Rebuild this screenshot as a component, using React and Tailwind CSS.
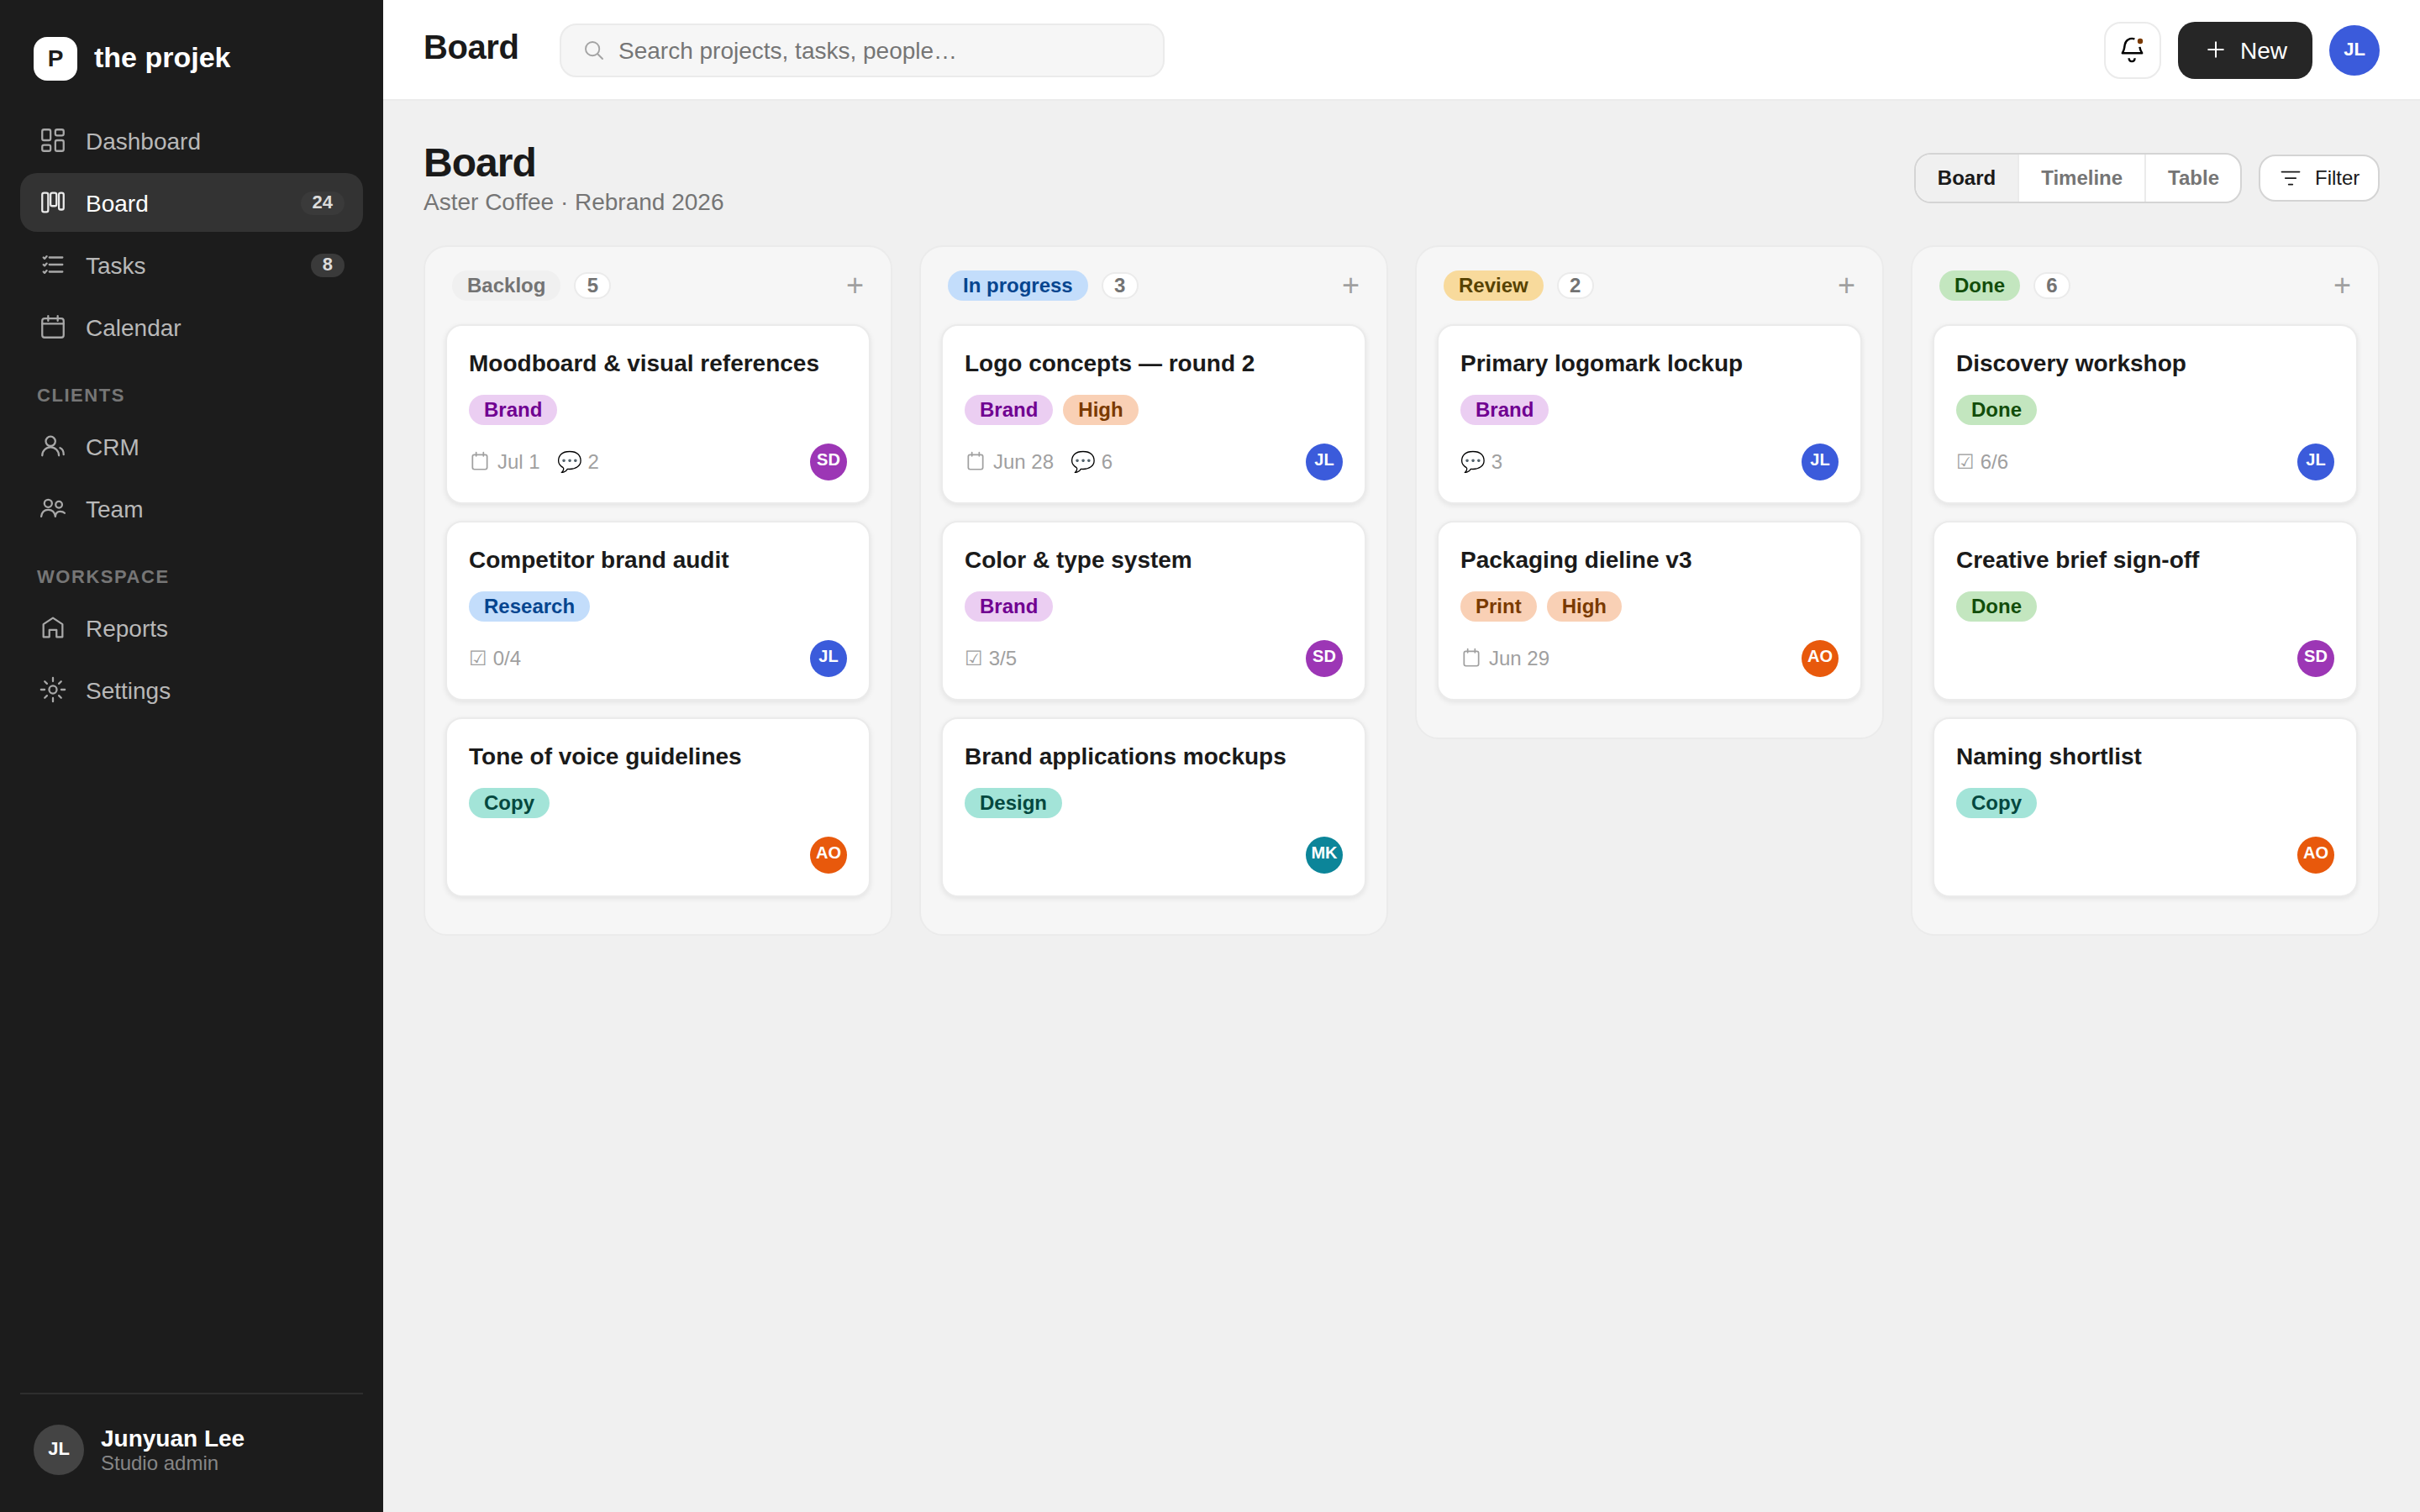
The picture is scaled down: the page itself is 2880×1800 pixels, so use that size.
import React from "react";
import clsx from "clsx";

const TAGS = {
  Brand: "bg-[#ebcef2] text-[#700091]",
  High: "bg-[#f9d0b5] text-[#7a3a00]",
  Print: "bg-[#f9d0b5] text-[#7a3a00]",
  Research: "bg-[#c3ddfb] text-[#06458f]",
  Copy: "bg-[#a3e4d8] text-[#05483f]",
  Design: "bg-[#a3e4d8] text-[#05483f]",
  Done: "bg-[#c3e6bf] text-[#124d0a]",
};

const PEOPLE = {
  JL: "bg-[#3b5bdb]",
  SD: "bg-[#9c36b5]",
  AO: "bg-[#e8590c]",
  MK: "bg-[#0c8599]",
};

const COLUMNS = [
  {
    name: "Backlog",
    pill: "bg-[#f0f0f0] text-[#737373]",
    count: 5,
    cards: [
      { title: "Moodboard & visual references", tags: ["Brand"], due: "Jul 1", comments: 2, who: "SD" },
      { title: "Competitor brand audit", tags: ["Research"], checks: "0/4", who: "JL" },
      { title: "Tone of voice guidelines", tags: ["Copy"], who: "AO" },
    ],
  },
  {
    name: "In progress",
    pill: "bg-[#c3ddfb] text-[#06458f]",
    count: 3,
    cards: [
      { title: "Logo concepts — round 2", tags: ["Brand", "High"], due: "Jun 28", comments: 6, who: "JL" },
      { title: "Color & type system", tags: ["Brand"], checks: "3/5", who: "SD" },
      { title: "Brand applications mockups", tags: ["Design"], who: "MK" },
    ],
  },
  {
    name: "Review",
    pill: "bg-[#f8da9c] text-[#574200]",
    count: 2,
    cards: [
      { title: "Primary logomark lockup", tags: ["Brand"], comments: 3, who: "JL" },
      { title: "Packaging dieline v3", tags: ["Print", "High"], due: "Jun 29", who: "AO" },
    ],
  },
  {
    name: "Done",
    pill: "bg-[#c3e6bf] text-[#124d0a]",
    count: 6,
    cards: [
      { title: "Discovery workshop", tags: ["Done"], checks: "6/6", who: "JL" },
      { title: "Creative brief sign-off", tags: ["Done"], who: "SD" },
      { title: "Naming shortlist", tags: ["Copy"], who: "AO" },
    ],
  },
];

// Nav icons, all on a 24 grid
const ICONS = {
  dashboard: (
    <>
      <rect x="3" y="3" width="7" height="9" rx="1.5" />
      <rect x="14" y="3" width="7" height="5" rx="1.5" />
      <rect x="14" y="12" width="7" height="9" rx="1.5" />
      <rect x="3" y="16" width="7" height="5" rx="1.5" />
    </>
  ),
  board: (
    <>
      <rect x="3" y="4" width="5" height="16" rx="1.5" />
      <rect x="10" y="4" width="5" height="11" rx="1.5" />
      <rect x="17" y="4" width="4" height="14" rx="1.5" />
    </>
  ),
  tasks: <path d="M9 6h11M9 12h11M9 18h11M4 6l1 1 1.8-2M4 12l1 1 1.8-2M4 18l1 1 1.8-2" />,
  calendar: (
    <>
      <rect x="3" y="5" width="18" height="16" rx="2" />
      <path d="M3 9.5h18M8 3v4M16 3v4" />
    </>
  ),
  crm: (
    <>
      <circle cx="10" cy="8" r="4" />
      <path d="M3 20a7 7 0 0 1 14 0M18 13.6c2 .8 3 2.6 3 5.6" />
    </>
  ),
  team: (
    <>
      <circle cx="8" cy="8" r="3.2" />
      <circle cx="17" cy="9" r="2.7" />
      <path d="M2.2 19c.5-3.5 2.6-5.6 5.8-5.6s5.5 2.1 6 5.6M14 19c.3-2.6 1.8-4.3 4-4.3 1.6 0 2.9.4 3.8 1.4" />
    </>
  ),
  reports: <path d="M4 9.3 12 4l8 5.3V20h-5v-6H9v6H4z" />,
  settings: (
    <>
      <circle cx="12" cy="12" r="3.2" />
      <path d="M12 2v3M12 19v3M2 12h3M19 12h3M5.1 5.1 7 7M17 17l1.9 1.9M18.9 5.1 17 7M7 17l-1.9 1.9" />
    </>
  ),
};

function NavItem({ icon, label, badge, active }) {
  return (
    <a
      className={clsx(
        "flex h-[70px] items-center gap-[22px] rounded-[20px] px-[22px] text-[28px]",
        active ? "bg-[#333333] text-white" : "text-[#b8b8b8]"
      )}
    >
      <svg
        className="size-[34px] shrink-0 opacity-90"
        viewBox="0 0 24 24"
        fill="none"
        stroke="currentColor"
        strokeWidth="1.6"
        strokeLinecap="round"
        strokeLinejoin="round"
      >
        {ICONS[icon]}
      </svg>
      <span className="pt-[3px]">{label}</span>
      {badge && (
        <span className="mt-0.5 ml-auto h-7 rounded-full bg-[#3a3a3a] px-3.5 text-[22px] leading-[26px] font-bold text-[#dcdcdc]">
          {badge}
        </span>
      )}
    </a>
  );
}

function NavLabel({ children }) {
  return (
    <div className="h-16 px-5 pt-[31px] text-[22px] leading-6 font-bold tracking-[0.07em] text-[#767676] uppercase">
      {children}
    </div>
  );
}

function Sidebar() {
  return (
    <aside className="flex w-[456px] shrink-0 flex-col bg-[#1c1c1c] px-6">
      <div className="mt-11 mb-9 flex items-center gap-5 px-4">
        <div className="grid size-[52px] place-items-center rounded-2xl bg-white text-[28px] font-bold text-[#1c1c1c]">P</div>
        <span className="pb-1 text-[34px] leading-none font-bold text-white">the projek</span>
      </div>

      <nav className="flex flex-col gap-1">
        <NavItem icon="dashboard" label="Dashboard" />
        <NavItem icon="board" label="Board" badge="24" active />
        <NavItem icon="tasks" label="Tasks" badge="8" />
        <NavItem icon="calendar" label="Calendar" />
        <NavLabel>Clients</NavLabel>
        <NavItem icon="crm" label="CRM" />
        <NavItem icon="team" label="Team" />
        <NavLabel>Workspace</NavLabel>
        <NavItem icon="reports" label="Reports" />
        <NavItem icon="settings" label="Settings" />
      </nav>

      {/* Signed-in user */}
      <div className="mt-auto mb-11 flex items-center gap-5 border-t-2 border-[#2e2e2e] px-4 pt-9">
        <div className="grid size-[60px] place-items-center rounded-full bg-[#444444] pb-[3px] text-[22px] font-bold text-white">JL</div>
        <div>
          <div className="pt-px text-[28px] leading-[31px] font-bold text-white">Junyuan Lee</div>
          <div className="text-2xl leading-7 text-[#868686]">Studio admin</div>
        </div>
      </div>
    </aside>
  );
}

function TopBar() {
  return (
    <header className="flex h-[120px] items-center border-b-2 border-[#ebebeb] bg-white px-12 pt-0.5">
      <div className="w-[162px] pb-2 text-[40px] leading-none font-bold tracking-[-0.01em] text-[#1a1a1a]">Board</div>
      <div className="flex h-16 w-[720px] items-center gap-3.5 rounded-[20px] border-2 border-[#ebebeb] bg-[#f6f6f6] px-6 text-[28px] text-[#757575]">
        <svg className="size-[30px] text-[#a3a3a3]" viewBox="0 0 24 24" fill="none" stroke="currentColor" strokeWidth="1.5" strokeLinecap="round">
          <circle cx="10.5" cy="10.5" r="6.5" />
          <path d="M15.4 15.4 20 20" />
        </svg>
        <span className="pt-0.5">Search projects, tasks, people…</span>
      </div>

      <div className="ml-auto flex items-center gap-5">
        <button className="grid size-[68px] place-items-center rounded-[20px] border-2 border-[#ebebeb] bg-white">
          <svg className="size-[34px]" viewBox="0 0 34 34" fill="none" stroke="#000" strokeWidth="2.4">
            <path d="M19.4 3.3C13.6 1.8 8.4 4.8 7.7 10.4 7.3 14.2 7 16.8 4.8 20.2h23.4c-1.6-2.4-2.4-4.6-2.8-7.4" strokeLinejoin="round" />
            <path d="M12.6 26.2c.2 5.2 6.8 5.2 7 0" />
            <circle cx="26" cy="6" r="3.2" fill="#7a3a00" stroke="none" />
          </svg>
        </button>
        <button className="flex h-[68px] w-[160px] items-center gap-4 rounded-[20px] bg-[#262626] pl-8 text-[28px] text-white">
          <svg className="mb-0.5 size-[26px]" viewBox="0 0 26 26" fill="none" stroke="currentColor" strokeWidth="2" strokeLinecap="round">
            <path d="M13 4.2v17.6M4.2 13h17.6" />
          </svg>
          <span className="pt-0.5">New</span>
        </button>
        <div className="grid size-[60px] place-items-center rounded-full bg-[#3b5bdb] pb-[3px] text-[22px] font-bold text-white">JL</div>
      </div>
    </header>
  );
}

function ViewSwitch() {
  return (
    <div className="flex h-[60px] overflow-hidden rounded-[20px] border-2 border-[#d4d4d4] bg-white text-2xl font-bold text-[#757575]">
      <button className="border-r-2 border-[#ebebeb] bg-[#f0f0f0] px-[26px] text-[#1a1a1a]">Board</button>
      <button className="border-r-2 border-[#ebebeb] px-[26px]">Timeline</button>
      <button className="pr-[25px] pl-[26px]">Table</button>
    </div>
  );
}

function Card({ title, tags, due, comments, checks, who }) {
  return (
    <article className="flex h-[214px] flex-col rounded-[20px] border-2 border-[#ebebeb] bg-white p-[26px] shadow-[0_2px_6px_rgba(0,0,0,0.08)]">
      <h3 className="text-[28px] leading-[38px] font-bold text-[#1a1a1a]">{title}</h3>
      <div className="mt-[18px] flex gap-3">
        {tags.map((tag) => (
          <span key={tag} className={clsx("h-9 rounded-[18px] px-[18px] text-2xl leading-9 font-bold", TAGS[tag])}>
            {tag}
          </span>
        ))}
      </div>
      <div className="mt-[22px] flex h-11 items-center gap-5 text-2xl text-[#a0a0a0]">
        {due && (
          <span className="flex items-center gap-2">
            <svg className="mb-0.5 size-[26px]" viewBox="0 0 24 24" fill="none" stroke="currentColor" strokeWidth="1.6" strokeLinecap="round">
              <rect x="4" y="5" width="16" height="16" rx="2" />
              <path d="M8 2.3v4M16 2.3v4" />
            </svg>
            {due}
          </span>
        )}
        {comments && <span>💬 {comments}</span>}
        {checks && <span>☑ {checks}</span>}
        <span className={clsx("ml-auto grid size-11 place-items-center rounded-full pb-1.5 text-xl leading-6 font-bold text-white", PEOPLE[who])}>
          {who}
        </span>
      </div>
    </article>
  );
}

function Column({ name, pill, count, cards }) {
  return (
    <section className="rounded-[28px] border-2 border-[#ebebeb] bg-[#f6f6f6] px-6 pt-7 pb-11">
      <div className="mb-7 flex h-9 items-center gap-4 px-2">
        <span className={clsx("h-9 rounded-[18px] px-[18px] text-2xl leading-9 font-bold", pill)}>{name}</span>
        <span className="h-8 w-11 rounded-full border-2 border-[#ebebeb] bg-white text-center text-2xl leading-7 font-bold text-[#737373]">
          {count}
        </span>
        <span className="ml-auto text-4xl leading-9 text-[#a0a0a0]">+</span>
      </div>
      <div className="flex flex-col gap-5">
        {cards.map((card) => (
          <Card key={card.title} {...card} />
        ))}
      </div>
    </section>
  );
}

export default function App() {
  return (
    <div className="flex h-screen bg-[#f0f0f0] font-['Liberation_Sans',Arial,sans-serif]">
      <Sidebar />
      <div className="flex min-w-0 flex-1 flex-col">
        <TopBar />
        <main className="px-12 pt-12">
          <div className="mb-9 flex h-[88px] items-center justify-between">
            <div>
              <h1 className="mb-1 text-5xl leading-[52px] font-bold tracking-[-0.02em] text-[#1a1a1a]">Board</h1>
              <p className="pt-px text-[28px] leading-[31px] text-[#757575]">Aster Coffee · Rebrand 2026</p>
            </div>
            <div className="flex items-center gap-5">
              <ViewSwitch />
              <button className="flex h-14 w-36 items-center gap-[15px] rounded-[20px] border-2 border-[#d4d4d4] bg-white pl-[22px] text-2xl text-[#1a1a1a]">
                <svg className="size-7" viewBox="0 0 28 28" fill="none" stroke="currentColor" strokeWidth="1.75" strokeLinecap="round">
                  <path d="M3.5 6.5h21M7.8 14h12.4M11.7 21.5h4.6" />
                </svg>
                Filter
              </button>
            </div>
          </div>

          <div className="grid grid-cols-4 items-start gap-8">
            {COLUMNS.map((col) => (
              <Column key={col.name} {...col} />
            ))}
          </div>
        </main>
      </div>
    </div>
  );
}
